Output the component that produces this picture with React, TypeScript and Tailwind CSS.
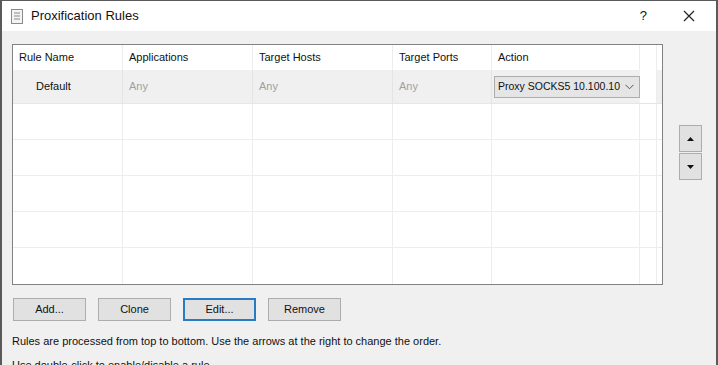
import React from "react";

const font = { fontFamily: '"Liberation Sans", Arial, sans-serif' };

const cols = [
  { title: "Rule Name", w: "w-[110px]" },
  { title: "Applications", w: "w-[130px]" },
  { title: "Target Hosts", w: "w-[140px]" },
  { title: "Target Ports", w: "w-[99px]" },
  { title: "Action", w: "w-[148px]" },
];

const EmptyRow = ({ last }: { last?: boolean }) => (
  <div className={"flex h-[36px] " + (last ? "" : "border-b border-[#ededed]")}>
    {cols.map((c) => (
      <div key={c.title} className={c.w + " border-r border-[#ededed]"} />
    ))}
    <div className="w-[17px] border-r border-[#ededed]" />
  </div>
);

const Btn = ({ label, focused }: { label: string; focused?: boolean }) => (
  <button
    className={
      "w-[73px] h-[23px] bg-[#e1e1e1] text-[11px] text-[#111] flex items-center justify-center " +
      (focused ? "border-2 border-[#2a7bc4]" : "border border-[#adadad]")
    }
  >
    {label}
  </button>
);

export default function App() {
  return (
    <div
      style={font}
      className="w-[718px] h-[365px] overflow-hidden bg-[#f0f0f0] border-l-2 border-r-2 border-t border-[#5a5a5a] text-[#111]"
    >
      <div className="h-[30px] bg-white flex items-center pl-[8px] pr-[16px]">
        <svg width="14" height="17" viewBox="0 0 14 17" className="mr-[7px]">
          <rect x="1.5" y="1.5" width="11" height="14" fill="#f4f4f4" stroke="#8a8a8a" />
          <line x1="4" y1="5" x2="10" y2="5" stroke="#8a8a8a" />
          <line x1="4" y1="8" x2="10" y2="8" stroke="#8a8a8a" />
          <line x1="4" y1="11" x2="10" y2="11" stroke="#8a8a8a" />
        </svg>
        <span className="text-[13px]">Proxification Rules</span>
        <span className="ml-auto text-[13px] mr-[36px]">?</span>
        <svg width="12" height="12" viewBox="0 0 12 12" className="mr-[5px]">
          <path d="M1 1 L11 11 M11 1 L1 11" stroke="#222" strokeWidth="1.2" />
        </svg>
      </div>

      <div className="flex pt-[13px] pl-[10px]">
        <div className="w-[651px] h-[241px] border border-[#828282] bg-white overflow-hidden">
          <div className="flex h-[25px] items-center">
            {cols.map((c) => (
              <div key={c.title} className={c.w + " h-full border-r border-[#ededed] pl-[6px] flex items-center text-[11px]"}>
                {c.title}
              </div>
            ))}
            <div className="w-[17px] h-full border-r border-[#ededed]" />
          </div>
          <div className="flex h-[34px] bg-[#f0f0f0] border-b border-[#e6e6e6] text-[11px]">
            <div className="w-[110px] pl-[23px] flex items-center border-r border-[#e4e4e4]">Default</div>
            <div className="w-[130px] pl-[6px] flex items-center text-[#a0a0a0] border-r border-[#e4e4e4]">Any</div>
            <div className="w-[140px] pl-[6px] flex items-center text-[#a0a0a0] border-r border-[#e4e4e4]">Any</div>
            <div className="w-[99px] pl-[6px] flex items-center text-[#a0a0a0] border-r border-[#e4e4e4]">Any</div>
            <div className="w-[148px] pl-[2px] flex items-center">
              <div className="w-[146px] h-[22px] bg-[#e5e5e5] border border-[#adadad] flex items-center pl-[3px] pr-[5px]">
                <span className="text-[10.5px] whitespace-nowrap">Proxy SOCKS5 10.100.10</span>
                <svg width="9" height="6" viewBox="0 0 9 6" className="ml-auto shrink-0">
                  <path d="M0.5 0.8 L4.5 4.8 L8.5 0.8" fill="none" stroke="#555" />
                </svg>
              </div>
            </div>
            <div className="w-[17px] bg-white border-r border-[#ededed]" />
          </div>
          <EmptyRow />
          <EmptyRow />
          <EmptyRow />
          <EmptyRow />
          <EmptyRow last />
        </div>

        <div className="flex flex-col ml-[16px] mt-[81px]">
          <button className="w-[23px] h-[27px] bg-[#e1e1e1] border border-[#adadad] flex items-center justify-center">
            <svg width="7" height="4" viewBox="0 0 7 4">
              <path d="M0 4 L3.5 0 L7 4 Z" fill="#111" />
            </svg>
          </button>
          <button className="w-[23px] h-[27px] mt-[1px] bg-[#e1e1e1] border border-[#adadad] flex items-center justify-center">
            <svg width="7" height="4" viewBox="0 0 7 4">
              <path d="M0 0 L3.5 4 L7 0 Z" fill="#111" />
            </svg>
          </button>
        </div>
      </div>

      <div className="flex gap-[12px] pl-[11px] mt-[13px]">
        <Btn label="Add..." />
        <Btn label="Clone" />
        <Btn label="Edit..." focused />
        <Btn label="Remove" />
      </div>

      <div className="pl-[10px] mt-[12px] text-[11px] leading-[16px]">
        Rules are processed from top to bottom. Use the arrows at the right to change the order.
      </div>
      <div className="pl-[10px] mt-[8px] text-[11px] leading-[16px]">
        Use double-click to enable/disable a rule.
      </div>
    </div>
  );
}
